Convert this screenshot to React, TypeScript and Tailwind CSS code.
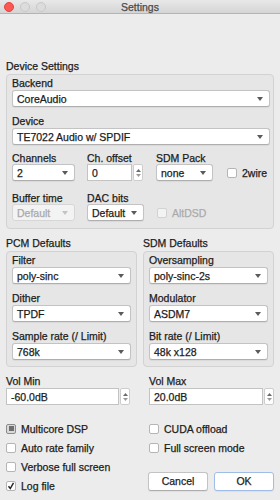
import React from "react";

const font = { fontFamily: '"Liberation Sans", Arial, sans-serif' };

function Arrow({ disabled }: { disabled?: boolean }) {
  return (
    <svg width="6" height="4" viewBox="0 0 6 4" className="shrink-0">
      <path d="M0 0 L6 0 L3 4 Z" fill={disabled ? "#c4c4c4" : "#5a5a5a"} />
    </svg>
  );
}

function Label({ children }: { children: React.ReactNode }) {
  return <div className="h-[12px] leading-[12px] text-[10.5px] text-[#1c1c1c] whitespace-nowrap">{children}</div>;
}

function Combo({ value, disabled, className = "" }: { value: string; disabled?: boolean; className?: string }) {
  return (
    <div
      className={`h-[17px] flex items-center justify-between pl-[4px] pr-[6px] rounded-[3px] border ${
        disabled
          ? "bg-[#f3f3f3] border-[#d6d6d6] text-[#a9a9a9]"
          : "bg-white border-[#c3c3c3] border-b-[#aeaeae] text-[#1c1c1c] shadow-[0_1px_1px_rgba(0,0,0,0.06)]"
      } text-[10.5px] leading-[12px] ${className}`}
    >
      <span className="whitespace-nowrap">{value}</span>
      <Arrow disabled={disabled} />
    </div>
  );
}

function Spin({ value, className = "" }: { value: string; className?: string }) {
  return (
    <div className={`h-[17px] flex items-stretch ${className}`}>
      <div className="flex-1 flex items-center pl-[4px] bg-white border border-[#c3c3c3] text-[10.5px] leading-[12px] text-[#1c1c1c]">
        {value}
      </div>
      <div className="w-[10px] ml-[1px] flex flex-col items-center justify-center gap-[2px] bg-white border border-[#cdcdcd] rounded-[2px]">
        <svg width="5" height="3" viewBox="0 0 5 3">
          <path d="M0 3 L5 3 L2.5 0 Z" fill="#6a6a6a" />
        </svg>
        <svg width="5" height="3" viewBox="0 0 5 3">
          <path d="M0 0 L5 0 L2.5 3 Z" fill="#9a9a9a" />
        </svg>
      </div>
    </div>
  );
}

function Check({ label, state, disabled }: { label: string; state?: "on" | "mixed"; disabled?: boolean }) {
  return (
    <div className="flex items-center gap-[5px] h-[19px]">
      <div
        className={`w-[10px] h-[10px] rounded-[2px] border flex items-center justify-center ${
          state === "mixed"
            ? "border-[#8c8c8c] bg-[#d9d9d9]"
            : disabled
            ? "border-[#d2d2d2] bg-[#f3f3f3]"
            : "border-[#b5b5b5] bg-white"
        }`}
      >
        {state === "mixed" && <div className="w-[5px] h-[5px] bg-[#6e6e6e]" />}
        {state === "on" && (
          <svg width="8" height="8" viewBox="0 0 8 8">
            <path d="M1.5 4.2 L3.3 6.5 L6.5 0.8" stroke="#222" strokeWidth="1.4" fill="none" />
          </svg>
        )}
      </div>
      <span className={`text-[10.5px] leading-[12px] whitespace-nowrap ${disabled ? "text-[#ababab]" : "text-[#1c1c1c]"}`}>
        {label}
      </span>
    </div>
  );
}

function Button({ children, primary }: { children: React.ReactNode; primary?: boolean }) {
  return (
    <div
      className={`w-[60px] h-[19px] flex items-center justify-center rounded-[3px] bg-white text-[10.5px] text-[#1c1c1c] border ${
        primary ? "border-[#9fbde6]" : "border-[#c3c3c3] border-b-[#adadad]"
      } shadow-[0_1px_1px_rgba(0,0,0,0.06)]`}
    >
      {children}
    </div>
  );
}

export default function App() {
  return (
    <div className="w-[280px] h-[500px] overflow-hidden bg-[#ececec] [-webkit-text-stroke:0.25px]" style={font}>
      <div className="h-[14px] grid grid-cols-[1fr_auto_1fr] items-center bg-gradient-to-b from-[#e8e8e8] to-[#d5d5d5] border-b border-[#b4b4b4]">
        <div className="flex items-center gap-[6px] pl-[4px]">
          <div className="w-[10px] h-[10px] rounded-full bg-[#fc5753] border border-[#e0443e]" />
          <div className="w-[10px] h-[10px] rounded-full bg-[#dcdcdc] border border-[#c8c8c8]" />
          <div className="w-[10px] h-[10px] rounded-full bg-[#dcdcdc] border border-[#c8c8c8]" />
        </div>
        <div className="text-[10.5px] leading-[12px] text-[#4a4a4a]">Settings</div>
        <div />
      </div>

      <div className="px-[6px] pt-[46px]">
        <Label>Device Settings</Label>
        <div className="mt-[2px] bg-[#e6e6e6] border border-[#d2d2d2] rounded-[4px] pl-[5px] pr-[3px] pt-[2px] pb-[6px]">
          <Label>Backend</Label>
          <Combo value="CoreAudio" className="mt-[1px]" />
          <div className="mt-[8px]">
            <Label>Device</Label>
            <Combo value="TE7022 Audio w/ SPDIF" className="mt-[1px]" />
          </div>
          <div className="mt-[7px] flex">
            <div className="w-[63px]">
              <Label>Channels</Label>
              <Combo value="2" />
            </div>
            <div className="w-[56px] ml-[12px]">
              <Label>Ch. offset</Label>
              <Spin value="0" />
            </div>
            <div className="w-[57px] ml-[13px]">
              <Label>SDM Pack</Label>
              <Combo value="none" />
            </div>
            <div className="ml-[14px] pt-[11px]">
              <Check label="2wire" />
            </div>
          </div>
          <div className="mt-[10px] flex">
            <div className="w-[63px]">
              <Label>Buffer time</Label>
              <Combo value="Default" disabled />
            </div>
            <div className="w-[57px] ml-[12px]">
              <Label>DAC bits</Label>
              <Combo value="Default" />
            </div>
            <div className="ml-[13px] pt-[11px]">
              <Check label="AltDSD" disabled />
            </div>
          </div>
        </div>

        <div className="mt-[8px] flex gap-[6px]">
          {[
            {
              title: "PCM Defaults",
              rows: [
                ["Filter", "poly-sinc"],
                ["Dither", "TPDF"],
                ["Sample rate (/ Limit)", "768k"],
              ],
            },
            {
              title: "SDM Defaults",
              rows: [
                ["Oversampling", "poly-sinc-2s"],
                ["Modulator", "ASDM7"],
                ["Bit rate (/ Limit)", "48k x128"],
              ],
            },
          ].map((g) => (
            <div key={g.title} className="w-[131px]">
              <Label>{g.title}</Label>
              <div className="mt-[2px] bg-[#e6e6e6] border border-[#d2d2d2] rounded-[4px] px-[5px] pt-[2px] pb-[6px] flex flex-col gap-[8px]">
                {g.rows.map(([l, v]) => (
                  <div key={l}>
                    <Label>{l}</Label>
                    <Combo value={v} className="mt-[1px]" />
                  </div>
                ))}
              </div>
            </div>
          ))}
        </div>

        <div className="mt-[8px] flex">
          <div className="w-[125px]">
            <Label>Vol Min</Label>
            <Spin value="-60.0dB" className="mt-[1px]" />
          </div>
          <div className="w-[126px] ml-[19px]">
            <Label>Vol Max</Label>
            <Spin value="20.0dB" className="mt-[1px]" />
          </div>
        </div>

        <div className="mt-[14px] flex">
          <div className="w-[145px]">
            <Check label="Multicore DSP" state="mixed" />
            <Check label="Auto rate family" />
            <Check label="Verbose full screen" />
            <Check label="Log file" state="on" />
          </div>
          <div>
            <Check label="CUDA offload" />
            <Check label="Full screen mode" />
            <div className="mt-[15px] -ml-[1px] flex gap-[6px]">
              <Button>Cancel</Button>
              <Button primary>OK</Button>
            </div>
          </div>
        </div>
      </div>
    </div>
  );
}
